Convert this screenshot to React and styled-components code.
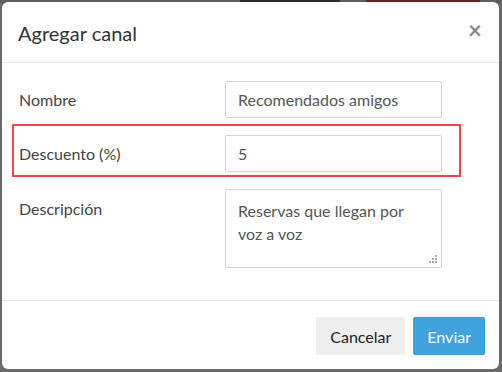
import React from "react";
import styled, { createGlobalStyle } from "styled-components";

const Global = createGlobalStyle`
  html, body { margin: 0; padding: 0; }
  body {
    width: 502px; height: 372px; overflow: hidden;
    font-family: Lato, "Open Sans", sans-serif;
    background: linear-gradient(to right, #5e5e5e 0, #5e5e5e 240px, #2a2a2a 240px, #2a2a2a 340px, #5e5e5e 340px, #5e5e5e 366px, #6e1a22 366px, #6e1a22 480px, #5e5e5e 480px);
  }
`;

const Backdrop = styled.div`
  width: 502px; height: 372px;
  padding: 2px 3px 3px 2px;
  box-sizing: border-box;
  background: linear-gradient(to bottom, transparent 0, transparent 3px, #6a6a6a 3px);
`;

const Modal = styled.div`
  width: 497px; height: 367px;
  background: #fff;
  border-radius: 6px;
  display: flex; flex-direction: column;
  box-sizing: border-box;
  overflow: hidden;
`;

const Header = styled.div`
  height: 61px;
  box-sizing: border-box;
  border-bottom: 1px solid #e5e5e5;
  display: flex; align-items: center; justify-content: space-between;
  padding: 0 17px 0 16px;
`;

const Title = styled.h4`
  margin: 0;
  font-size: 20px; font-weight: 400; color: #333;
  line-height: 24px;
  padding-top: 2px;
`;

const Close = styled.span`
  font-size: 24px; font-weight: 700; color: #8a8a8a;
  line-height: 20px;
  margin-top: -4px;
`;

const Body = styled.div`
  padding: 18px 57px 32px 17px;
  display: flex; flex-direction: column; gap: 17px;
  border-bottom: 1px solid #e5e5e5;
`;

const Row = styled.div`
  position: relative;
  display: grid;
  grid-template-columns: 206px 217px;
  align-items: start;
`;

const Label = styled.div`
  font-size: 16px; color: #444;
  line-height: 20px;
  padding-top: ${(p) => p.$pt || 9}px;
`;

const Field = styled.div`
  position: relative;
  box-sizing: border-box;
  height: ${(p) => p.$h || 37}px;
  border: 1px solid #d3d3d3;
  border-radius: 2px;
  padding: 8px 12px;
  font-size: 16px; color: #555;
  line-height: ${(p) => p.$lh || 20}px;
  padding-top: ${(p) => p.$pt || 8}px;
`;

const Grip = styled.svg`
  position: absolute; right: 3px; bottom: 3px;
`;

const Highlight = styled.div`
  position: absolute;
  left: -7px; top: -11px; right: -19px; bottom: -5px;
  border: 2px solid #f4444a;
  pointer-events: none;
`;

const Footer = styled.div`
  flex: 1;
  display: flex; justify-content: flex-end; align-items: flex-start;
  gap: 8px;
  padding: 16px 14px 0 0;
`;

const Button = styled.button`
  height: 38px;
  padding: 0 ${(p) => p.$px}px;
  border-radius: 2px;
  font-family: Lato, sans-serif;
  font-size: 16px;
  border: 1px solid ${(p) => (p.$primary ? "#3a99d4" : "#eeeeee")};
  background: ${(p) => (p.$primary ? "#40a3de" : "#efefef")};
  color: ${(p) => (p.$primary ? "#fff" : "#222")};
`;

export default function App() {
  return (
    <>
      <Global />
      <Backdrop>
        <Modal>
          <Header>
            <Title>Agregar canal</Title>
            <Close>×</Close>
          </Header>
          <Body>
            <Row>
              <Label>Nombre</Label>
              <Field>Recomendados amigos</Field>
            </Row>
            <Row>
              <Highlight />
              <Label>Descuento (%)</Label>
              <Field>5</Field>
            </Row>
            <Row>
              <Label $pt={10}>Descripción</Label>
              <Field $h={79} $lh={23} $pt={9}>
                Reservas que llegan por voz a voz
                <Grip width="9" height="9" viewBox="0 0 9 9">
                  <rect x="6" y="0" width="2" height="2" fill="#aaa" />
                  <rect x="3" y="3" width="2" height="2" fill="#aaa" />
                  <rect x="6" y="3" width="2" height="2" fill="#aaa" />
                  <rect x="0" y="6" width="2" height="2" fill="#aaa" />
                  <rect x="3" y="6" width="2" height="2" fill="#aaa" />
                  <rect x="6" y="6" width="2" height="2" fill="#aaa" />
                </Grip>
              </Field>
            </Row>
          </Body>
          <Footer>
            <Button $px={13}>Cancelar</Button>
            <Button $primary $px={13}>Enviar</Button>
          </Footer>
        </Modal>
      </Backdrop>
    </>
  );
}
